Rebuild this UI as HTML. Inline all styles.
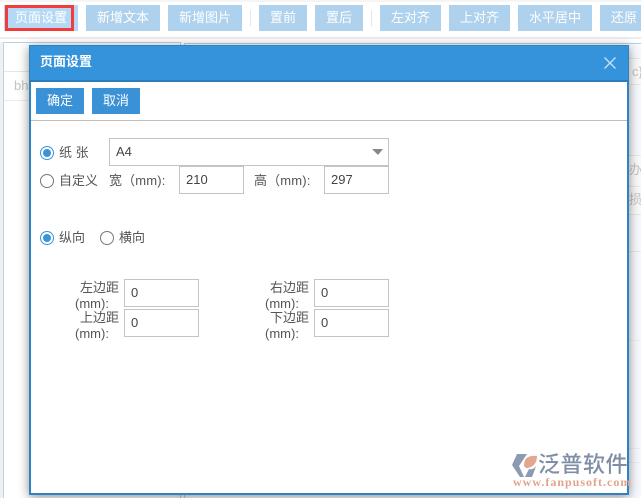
<!DOCTYPE html>
<html lang="zh">
<head>
<meta charset="utf-8">
<title>页面设置</title>
<style>
html,body{margin:0;padding:0}
body{width:641px;height:498px;position:relative;overflow:hidden;background:#fff;font-family:"Liberation Sans","Noto Sans CJK SC",sans-serif;font-size:13px;color:#555}
.a{position:absolute;box-sizing:border-box;white-space:nowrap}
.tb{top:5px;height:26px;line-height:26px;background:#aed2ee;color:#fff;text-align:center;font-size:13px;overflow:hidden}
.sep{top:10px;width:1px;height:16px;background:#e6e6e6}
.inp{border:1px solid #c4c4c4;background:#fff;color:#444;font-size:13px;padding-left:6px}
.rad{width:14px;height:14px;border:1px solid #777;border-radius:50%;background:#fff}
.rad.on{border-color:#3a94d8}
.rad.on:after{content:"";position:absolute;left:2px;top:2px;width:8px;height:8px;border-radius:50%;background:#3a94d8}
.btn{top:88px;height:26px;width:48px;line-height:26px;background:#3a91d5;color:#fff;text-align:center;font-size:13px}
.lb{font-size:13px;color:#555;line-height:16px}
.g{color:#c4c4c4}
</style>
</head>
<body>
<div class="a" style="left:0;top:0;width:641px;height:2px;background:#f5f5f5"></div>
<div class="a" style="left:0;top:37px;width:641px;height:2px;background:#eeeeee"></div>

<div class="a tb" style="left:4px;width:74px;background:#b5d9f5">页面设置</div>
<div class="a" style="left:5px;top:5px;width:69px;height:26px;border:3px solid #f23c3c"></div>
<div class="a tb" style="left:86px;width:74px">新增文本</div>
<div class="a tb" style="left:168px;width:74px">新增图片</div>
<div class="a sep" style="left:250px"></div>
<div class="a tb" style="left:259px;width:48px">置前</div>
<div class="a tb" style="left:315px;width:48px">置后</div>
<div class="a sep" style="left:371px"></div>
<div class="a tb" style="left:380px;width:61px">左对齐</div>
<div class="a tb" style="left:449px;width:61px">上对齐</div>
<div class="a tb" style="left:518px;width:74px">水平居中</div>
<div class="a tb" style="left:600px;width:48px">还原</div>

<!-- background page -->
<div class="a" style="left:0;top:42px;width:3px;height:456px;background:#f0f0f0"></div>
<div class="a" style="left:3px;top:42px;width:178px;height:456px;border:1px solid #b9d3e6;border-bottom:0;background:#fff"></div>
<div class="a" style="left:184px;top:43px;width:457px;height:455px;border-left:1px solid #b9d3e6;border-top:1px solid #b9d0e0"></div>
<div class="a" style="left:4px;top:71px;width:26px;height:1px;background:#e6e6e6"></div>
<div class="a" style="left:4px;top:100px;width:26px;height:1px;background:#ececec"></div>
<div class="a g" style="left:14px;top:78px;line-height:16px;font-size:13px">bh</div>
<div class="a" style="left:629px;top:44px;width:12px;height:454px;background:#f6f9fd"></div>
<div class="a" style="left:629px;top:58px;width:12px;height:27px;background:#fafafa;border-top:1px solid #e8e8e8;border-bottom:1px solid #e8e8e8"></div>
<div class="a g" style="left:632px;top:64px;line-height:16px;font-size:13px;width:9px;overflow:hidden">c}</div>
<div class="a" style="left:629px;top:155px;width:12px;height:32px;background:#fafafa;border-top:1px solid #e8e8e8;border-bottom:1px solid #e8e8e8"></div>
<div class="a g" style="left:629px;top:162px;width:12px;overflow:hidden;line-height:16px">办</div>
<div class="a" style="left:629px;top:187px;width:12px;height:28px;background:#fafafa;border-bottom:1px solid #e8e8e8"></div>
<div class="a g" style="left:629px;top:192px;width:12px;overflow:hidden;line-height:16px">损</div>
<div class="a" style="left:629px;top:251px;width:12px;height:1px;background:#e8e8e8"></div>
<div class="a" style="left:629px;top:340px;width:12px;height:1px;background:#eeeeee"></div>
<div class="a" style="left:629px;top:448px;width:12px;height:1px;background:#eeeeee"></div>
<div class="a" style="left:629px;top:462px;width:12px;height:1px;background:#eeeeee"></div>

<!-- dialog -->
<div class="a" style="left:29px;top:45px;width:600px;height:450px;background:#fff;border:2px solid #2f83c2;border-top:0;box-shadow:0 2px 10px rgba(0,0,0,.45)"></div>
<div class="a" style="left:29px;top:45px;width:600px;height:37px;background:#3593db;border:1px solid #2f83c2;border-bottom:2px solid #2b7db8"></div>
<div class="a" style="left:40px;top:53px;line-height:18px;font-size:13px;font-weight:bold;color:#fff">页面设置</div>
<svg class="a" style="left:603px;top:56px" width="14" height="14" viewBox="0 0 14 14"><path d="M1.5 1.5L12.5 12.5M12.5 1.5L1.5 12.5" stroke="#c5e0f5" stroke-width="1.4" fill="none"/></svg>

<div class="a btn" style="left:36px">确定</div>
<div class="a btn" style="left:92px">取消</div>
<div class="a" style="left:31px;top:120px;width:596px;height:1px;background:#bdbdbd"></div>

<div class="a rad on" style="left:40px;top:146px"></div>
<div class="a lb" style="left:59px;top:145px">纸 张</div>
<div class="a inp" style="left:109px;top:138px;width:280px;height:28px;line-height:25px">A4</div>
<div class="a" style="left:372px;top:149px;width:0;height:0;border-left:6px solid transparent;border-right:5px solid transparent;border-top:6px solid #888"></div>

<div class="a rad" style="left:40px;top:174px"></div>
<div class="a lb" style="left:59px;top:173px">自定义</div>
<div class="a lb" style="left:109px;top:173px;letter-spacing:.15px">宽（mm):</div>
<div class="a inp" style="left:179px;top:166px;width:65px;height:28px;line-height:26px">210</div>
<div class="a lb" style="left:254px;top:173px;letter-spacing:.15px">高（mm):</div>
<div class="a inp" style="left:324px;top:166px;width:65px;height:28px;line-height:26px">297</div>

<div class="a rad on" style="left:40px;top:231px"></div>
<div class="a lb" style="left:59px;top:230px">纵向</div>
<div class="a rad" style="left:100px;top:231px"></div>
<div class="a lb" style="left:119px;top:230px">横向</div>

<div class="a lb" style="left:80px;top:280px">左边距</div>
<div class="a lb" style="left:75px;top:296px">(mm):</div>
<div class="a inp" style="left:124px;top:279px;width:75px;height:28px;line-height:26px">0</div>
<div class="a lb" style="left:80px;top:310px">上边距</div>
<div class="a lb" style="left:75px;top:326px">(mm):</div>
<div class="a inp" style="left:124px;top:309px;width:75px;height:28px;line-height:26px">0</div>
<div class="a lb" style="left:270px;top:280px">右边距</div>
<div class="a lb" style="left:265px;top:296px">(mm):</div>
<div class="a inp" style="left:314px;top:279px;width:75px;height:28px;line-height:26px">0</div>
<div class="a lb" style="left:270px;top:310px">下边距</div>
<div class="a lb" style="left:265px;top:326px">(mm):</div>
<div class="a inp" style="left:314px;top:309px;width:75px;height:28px;line-height:26px">0</div>

<!-- watermark logo -->
<svg class="a" style="left:512px;top:453px" width="27" height="26" viewBox="0 0 27 26">
<path d="M5 1H15L7 13L12 24H8L0 12Z" fill="#8d9bb1"/>
<path d="M12 13C12 6 15 2 25 3C25 10 21 15 14 15Z" fill="#e3a78f"/>
<path d="M13 24L17 16C20 17 24 15 25 11L20 24Z" fill="#8d9bb1"/>
</svg>
<div class="a" style="left:538px;top:452px;font-size:22px;line-height:26px;color:#7f8ea6;font-weight:500;letter-spacing:.5px">泛普软件</div>
<div class="a" style="left:513px;top:476px;font-size:12px;line-height:13px;color:#e0a48c;font-family:'Liberation Serif',serif;font-weight:bold;letter-spacing:1px">www.fanpusoft.com</div>
</body>
</html>
